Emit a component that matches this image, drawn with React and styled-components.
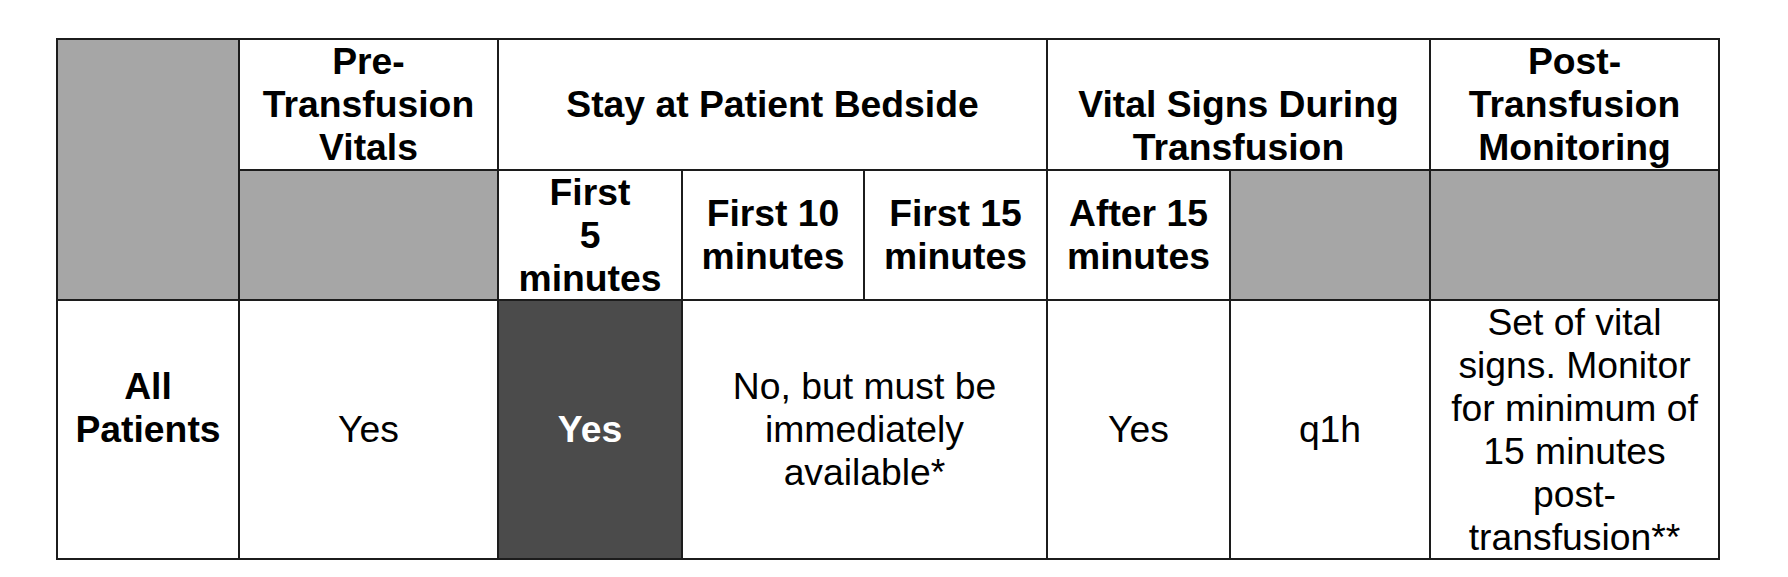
import styled, { createGlobalStyle } from 'styled-components';

const GlobalStyle = createGlobalStyle`
  html, body {
    margin: 0;
    padding: 0;
    background: #ffffff;
  }
  body {
    font-family: "Liberation Sans", Arial, sans-serif;
    color: #000000;
  }
`;

const Page = styled.div`
  width: 1788px;
  height: 577px;
  padding: 38px 0 0 56px;
  box-sizing: border-box;
  overflow: hidden;
`;

const Sheet = styled.div`
  display: grid;
  grid-template-columns: 180px 257px 182px 180px 181px 181px 198px 287px;
  grid-template-rows: 129px 128px 257px;
  gap: 2px;
  padding: 2px;
  width: max-content;
  background: #1c1c1c;
`;

// $shift moves the text by half a line, the source cell had an empty line above/below
const Cell = styled.div`
  grid-column: span ${props => props.$span || 1};
  grid-row: span ${props => props.$rows || 1};
  display: flex;
  align-items: center;
  justify-content: center;
  text-align: center;
  padding: ${props => {
    if (props.$shift === 'down') return '43px 14px 0';
    if (props.$shift === 'up') return '0 14px 43px';
    return '0 14px';
  }};
  font-size: 37.3px;
  line-height: 43px;
  font-weight: ${props => (props.$bold ? 700 : 400)};
  background: ${props => {
    if (props.$tone === 'gray') return '#a6a6a6';
    if (props.$tone === 'dark') return '#4b4b4b';
    return '#ffffff';
  }};
  color: ${props => (props.$tone === 'dark' ? '#ffffff' : '#000000')};
`;

const HeadCell = (props) => <Cell $bold {...props} />;

const App = () => (
  <>
    <GlobalStyle />
    <Page>
      <Sheet>
        <Cell $tone="gray" $rows={2} />
        <HeadCell>Pre-Transfusion Vitals</HeadCell>
        <HeadCell $span={3}>Stay at Patient Bedside</HeadCell>
        <HeadCell $span={2} $shift="down">Vital Signs During Transfusion</HeadCell>
        <HeadCell>Post-Transfusion Monitoring</HeadCell>

        <Cell $tone="gray" />
        <HeadCell>First<br />5<br />minutes</HeadCell>
        <HeadCell>First 10 minutes</HeadCell>
        <HeadCell>First 15 minutes</HeadCell>
        <HeadCell>After 15 minutes</HeadCell>
        <Cell $tone="gray" />
        <Cell $tone="gray" />

        <HeadCell $shift="up">All Patients</HeadCell>
        <Cell>Yes</Cell>
        <Cell $tone="dark" $bold>Yes</Cell>
        <Cell $span={2}>No, but must be immediately available*</Cell>
        <Cell>Yes</Cell>
        <Cell>q1h</Cell>
        <Cell>Set of vital signs. Monitor for minimum of 15 minutes post-transfusion**</Cell>
      </Sheet>
    </Page>
  </>
);

export default App;
